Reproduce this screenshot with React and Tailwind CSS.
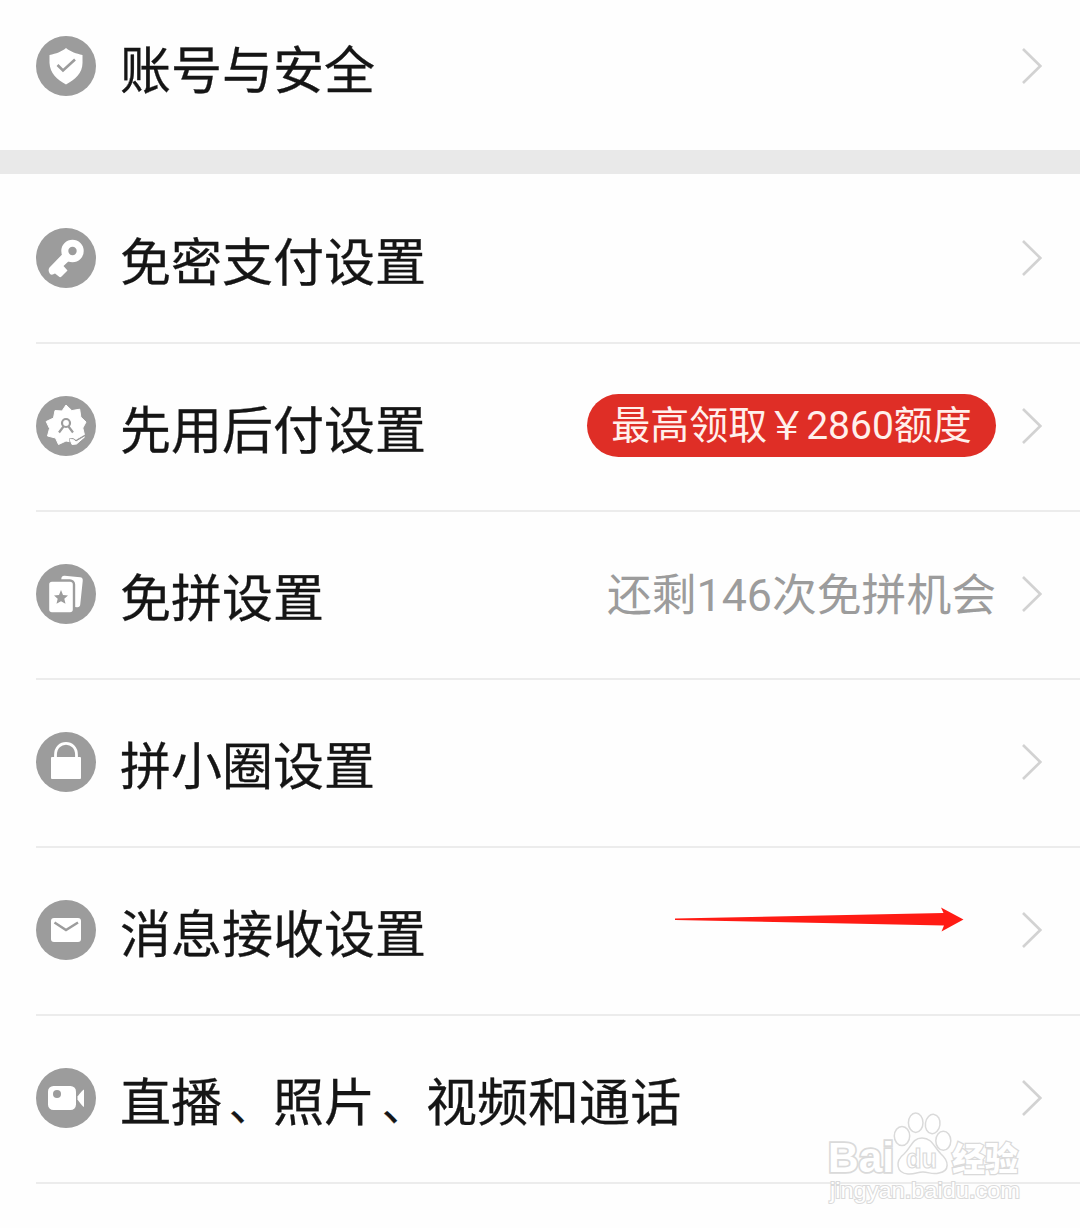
const GRAY = "#9c9c9c";

function Disc({ children }) {
  return (
    <svg viewBox="0 0 60 60" className="h-[60px] w-[60px] shrink-0" fill="none">
      <circle cx="30" cy="30" r="30" fill={GRAY} />
      {children}
    </svg>
  );
}

const ShieldIcon = () => (
  <Disc>
    <path d="M30 12C35 16 40 17.500 46.500 19V27C46.500 37 39 43.500 30 48.500C21 43.500 14 37 13.500 27V19C20.500 17.500 25 16 30 12Z" fill="#fff" />
    <path d="M21.500 29L27 34.500L39 23.500" stroke={GRAY} strokeWidth="2.600" />
  </Disc>
);

const KeyIcon = () => (
  <Disc>
    <circle cx="36.500" cy="23" r="7.700" stroke="#fff" strokeWidth="7" />
    <path d="M28 24.500L13.500 39.500Q11.500 42.500 14 46Q16 47.500 19 45.500L23.500 49Q24.500 49.500 25.500 48.500L31.500 42.500L27.500 38L35 31Z" fill="#fff" />
  </Disc>
);

const SealIcon = () => (
  <Disc>
    <path d="M30 9L35.800 14.600L43.700 13.200L44.800 21L50 26L46.800 32L48.500 39L42.500 42L38 46.500L30 45L22.500 48.500L19.500 42L11.500 40L13.500 32.500L10.200 25.500L17.500 22L19 14.500L26 15Z" fill="#fff" stroke="#fff" strokeLinejoin="round" />
    <circle cx="30" cy="27" r="4" stroke={GRAY} strokeWidth="2.200" />
    <path d="M27.500 30.500L23 36.500M32.500 30.500L37 36.500" stroke={GRAY} strokeWidth="2.200" />
    <path d="M33 42.500L37 42L40 44L49 38.500L52 42L40 50H34Z" fill={GRAY} />
    <path d="M34 43.500L37.500 43.800L40 46L48.500 41L40.500 48L36 48.500Z" fill="#fff" stroke="#fff" />
  </Disc>
);

const CardsIcon = () => (
  <Disc>
    <rect x="24" y="12.500" width="21.500" height="30" rx="3" fill="#fff" transform="rotate(6 35 28)" />
    <rect x="12" y="16.500" width="26" height="33" rx="4" fill="#fff" stroke={GRAY} strokeWidth="2.400" />
    <path d="M25 26L27 31L32 31.500L28.300 34.800L29.500 39.800L25 37.200L20.500 39.800L21.700 34.800L18 31.500L23 31Z" fill={GRAY} />
  </Disc>
);

const LockIcon = () => (
  <Disc>
    <path d="M19.500 26V23C19.500 7.500 40.500 7.500 40.500 23V26" stroke="#fff" strokeWidth="2.800" />
    <rect x="15" y="25" width="30" height="22" rx="1" fill="#fff" />
  </Disc>
);

const MailIcon = () => (
  <Disc>
    <rect x="15" y="18" width="30" height="24" rx="3" fill="#fff" />
    <path d="M18.500 22.500L30 30L42 22.500" stroke={GRAY} strokeWidth="2.500" />
  </Disc>
);

const CameraIcon = () => (
  <Disc>
    <rect x="12" y="18" width="28" height="24" rx="5.500" fill="#fff" />
    <circle cx="21" cy="26" r="4" fill={GRAY} />
    <path d="M48 21.500V39Q46 38 41.500 31.500V28.500Q46 22.500 48 21.500Z" fill="#fff" />
  </Disc>
);

const Chevron = () => (
  <svg viewBox="0 0 20 36" className="h-9 w-5 shrink-0" fill="none">
    <path d="M1 1L18.300 18L1 35" stroke="#d2d2d2" strokeWidth="2.600" />
  </svg>
);

function Item({ icon: Icon, label, children }) {
  return (
    <div className="flex min-w-0 flex-1 items-center pr-[38px]">
      <Icon />
      <span className="ml-6 whitespace-nowrap pt-[11px] text-[51px] leading-[60px] text-[#151515] [-webkit-text-stroke:0.3px_#151515]">
        {label.split("").map((char, i) =>
          char === "、" ? <span key={i} className="inline-block w-[51px] pl-[7px] text-[44px] leading-[50px]">{char}</span> : char
        )}
      </span>
      <div className="ml-auto mr-[26px] flex items-center">{children}</div>
      <Chevron />
    </div>
  );
}

const rows = [
  { icon: KeyIcon, label: "免密支付设置" },
  {
    icon: SealIcon,
    label: "先用后付设置",
    extra: (
      <span className="mb-px flex h-[63px] w-[409px] items-center justify-center whitespace-nowrap rounded-full bg-[#df2e26] text-[39px] leading-[60px] text-[#fff0ec]">
        最高领取￥2860额度
      </span>
    ),
  },
  {
    icon: CardsIcon,
    label: "免拼设置",
    extra: <span className="whitespace-nowrap pt-[3px] text-[44.8px] leading-[60px] text-[#9c9c9c]">还剩146次免拼机会</span>,
  },
  { icon: LockIcon, label: "拼小圈设置" },
  { icon: MailIcon, label: "消息接收设置" },
  { icon: CameraIcon, label: "直播、照片、视频和通话" },
];

function Watermark() {
  return (
    <svg viewBox="0 0 200 100" className="absolute left-[825px] top-[1108px] h-[100px] w-[200px]" fill="#fff" stroke="#dadada" strokeWidth="1.500">
      <text x="3" y="64" fontSize="43" fontWeight="700" fontFamily="'Liberation Sans', sans-serif" textLength="66" lengthAdjust="spacingAndGlyphs" strokeWidth="3.500" paintOrder="stroke">Bai</text>
      <ellipse cx="77" cy="28" rx="7.700" ry="9.500" />
      <ellipse cx="90.700" cy="14.700" rx="7.300" ry="9.700" />
      <ellipse cx="107.700" cy="16" rx="7.300" ry="9.700" transform="rotate(8 107.700 16)" />
      <ellipse cx="118.300" cy="32.700" rx="7.500" ry="9.500" />
      <path d="M97 30C87 30 86 40 79 46C70 53 71 65 83 66C90 66.500 92 64 98 64C104 64 107 67 114 65C125 63 124 53 116 46C109 39 107 30 97 30Z" />
      <text x="81" y="60" fontSize="27" fontWeight="700" fontFamily="'Liberation Sans', sans-serif" textLength="31" lengthAdjust="spacingAndGlyphs" strokeWidth="1.200">du</text>
      <text x="127" y="63" fontSize="33" fontWeight="900" fontFamily="'Noto Sans CJK SC', sans-serif" textLength="66" strokeWidth="2.500" paintOrder="stroke">经验</text>
      <text x="5" y="90" fontSize="22" fontFamily="'Liberation Sans', sans-serif" textLength="190" lengthAdjust="spacingAndGlyphs" strokeWidth="2" paintOrder="stroke">jingyan.baidu.com</text>
    </svg>
  );
}

export default function App() {
  return (
    <main className="relative h-[1228px] w-[1080px] overflow-hidden bg-[#fefefe] font-[Roboto,'Noto_Sans_CJK_SC',sans-serif]">
      <section className="flex h-[150px] pb-[18px] pl-9">
        <Item icon={ShieldIcon} label="账号与安全" />
      </section>
      <div className="h-6 bg-[#e9e9e9]" />
      <section className="-mt-0.5 pl-9">
        {rows.map((row, i) => (
          <div
            key={row.label}
            className={`flex border-t-2 ${i === 0 ? "h-[170px] border-transparent" : "h-[168px] border-[#ececec] pb-0.5"}`}
          >
            <Item icon={row.icon} label={row.label}>{row.extra}</Item>
          </div>
        ))}
        <div className="h-0.5 bg-[#ececec]" />
      </section>
      <svg viewBox="0 0 290 26" className="absolute left-[675px] top-[907px] h-[26px] w-[290px]">
        <path d="M0 11.500L268.500 6L266 0.500L288.500 12.500L266.500 24.500L269 18.500L0 13Z" fill="#ff1b14" />
      </svg>
      <Watermark />
    </main>
  );
}
